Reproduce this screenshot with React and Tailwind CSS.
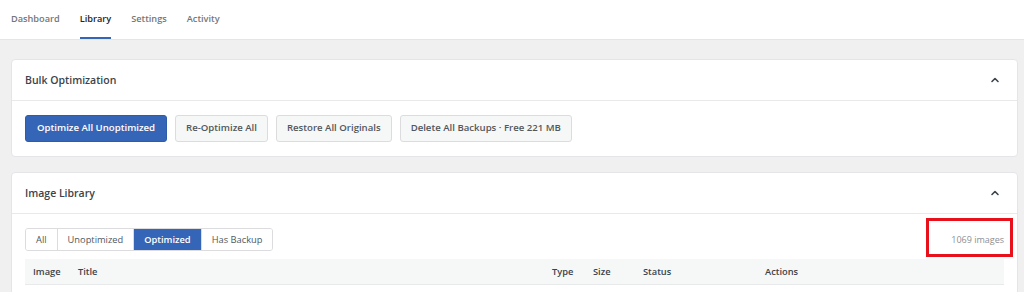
import { ChevronUp } from 'lucide-react'

const font = { fontFamily: '"Open Sans", "Liberation Sans", sans-serif' }

function Card({ title, children }) {
  return (
    <div className="bg-white border border-[#e3e5e8] rounded-[4px]">
      <div className="h-[41px] flex items-center justify-between pl-[13px] pr-[16px] border-b border-[#e8e9eb]">
        <h2 className="text-[10.5px] font-semibold text-[#3c434a] pt-[1px]">{title}</h2>
        <ChevronUp className="w-[12px] h-[12px] text-[#3c434a]" strokeWidth={3.2} />
      </div>
      {children}
    </div>
  )
}

function GrayButton({ children }) {
  return (
    <button className="h-[27px] px-[10px] rounded-[3px] border border-[#dcdcde] bg-[#f6f7f7] text-[9.6px] font-semibold text-[#50575e]">
      {children}
    </button>
  )
}

export default function App() {
  const tabs = ['Dashboard', 'Library', 'Settings', 'Activity']
  const filters = ['All', 'Unoptimized', 'Optimized', 'Has Backup']

  return (
    <div style={font} className="w-[1024px] h-[292px] overflow-hidden bg-[#f0f0f1]">
      <nav className="h-[40px] bg-white border-b border-[#e3e5e8] flex items-stretch gap-[20px] pl-[11px]">
        {tabs.map(t => (
          <div
            key={t}
            className={
              'flex items-center text-[9.2px] font-semibold border-b-2 pt-[1px] ' +
              (t === 'Library' ? 'text-[#1d2327] border-[#3565b7]' : 'text-[#72777c] border-transparent')
            }
          >
            {t}
          </div>
        ))}
      </nav>

      <div className="pt-[19px] pl-[11px] pr-[6px] flex flex-col gap-[15px]">
        <Card title="Bulk Optimization">
          <div className="px-[13px] pt-[14px] pb-[14px] flex gap-[8px]">
            <button className="h-[27px] px-[11px] rounded-[3px] bg-[#3565b7] border border-[#2f5ca8] text-[9.6px] font-semibold text-white">
              Optimize All Unoptimized
            </button>
            <GrayButton>Re-Optimize All</GrayButton>
            <GrayButton>Restore All Originals</GrayButton>
            <GrayButton>Delete All Backups · Free 221 MB</GrayButton>
          </div>
        </Card>

        <Card title="Image Library">
          <div className="px-[13px] pt-[14px]">
            <div className="flex items-center justify-between">
              <div className="flex h-[23px] border border-[#dcdcde] rounded-[3px] overflow-hidden">
                {filters.map((f, i) => (
                  <div
                    key={f}
                    className={
                      'flex items-center px-[10px] text-[9.3px] ' +
                      (i > 0 ? 'border-l border-[#dcdcde] ' : '') +
                      (f === 'Optimized' ? 'bg-[#3565b7] text-white font-semibold' : 'bg-white text-[#50575e] font-medium')
                    }
                  >
                    {f}
                  </div>
                ))}
              </div>
              <div className="relative text-[9px] leading-[13px] text-[#8c8f94]">
                1069 images
                <div className="absolute left-[-25px] right-[-9px] top-[-15px] bottom-[-11px] border-[3px] border-[#e8101a]" />
              </div>
            </div>
            <div className="mt-[8px] h-[26px] bg-[#f6f7f7] border-b border-[#e8e9eb] flex items-center text-[9.3px] font-semibold text-[#3c434a]">
              <div className="w-[53px] pl-[8px]">Image</div>
              <div className="w-[474px]">Title</div>
              <div className="w-[41px]">Type</div>
              <div className="w-[50px]">Size</div>
              <div className="w-[122px]">Status</div>
              <div>Actions</div>
            </div>
            <div className="h-[20px]" />
          </div>
        </Card>
      </div>
    </div>
  )
}
